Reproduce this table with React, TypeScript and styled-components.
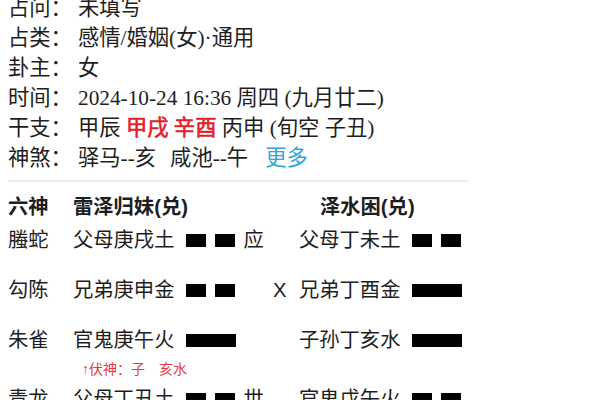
import React from "react";
import styled, { createGlobalStyle } from "styled-components";

const Global = createGlobalStyle`
  html, body { margin: 0; padding: 0; background: #fff; overflow: hidden; }
  body { color: #1e1e1e; }
`;

const Page = styled.div`
  width: 460px;
  padding-left: 8px;
  margin-top: -7px;
`;

const Info = styled.div`
  font-family: "Liberation Serif", "Noto Sans CJK SC", serif;
  font-size: 21.3px;
`;

const InfoRow = styled.div`
  display: flex;
  line-height: 30px;
  height: 30px;
  white-space: nowrap;
`;

const Label = styled.span`
  width: 70px;
  flex: none;
`;

const Red = styled.span`
  color: #e3202a;
  -webkit-text-stroke: 0.6px #e3202a;
`;

const Item = styled.span`
  margin-right: 14px;
`;

const More = styled.span`
  color: #2ea3dc;
  margin-left: 3px;
`;

const Divider = styled.div`
  height: 2px;
  background: #ececec;
  margin-top: 7px;
`;

const Table = styled.div`
  font-family: "Liberation Sans", "Noto Sans CJK SC", sans-serif;
  font-size: 20.3px;
  margin-top: 10px;
`;

const Head = styled.div`
  display: grid;
  grid-template-columns: 65px 247px auto;
  line-height: 30px;
  font-weight: 700;
  margin-bottom: 3px;
`;

const Group = styled.div`
  display: flex;
  flex-direction: column;
`;

const Row = styled.div`
  display: grid;
  grid-template-columns: 65px 200px 26px auto;
  line-height: 30px;
  height: 30px;
  align-items: center;
  white-space: nowrap;
`;

const Sub = styled.div`
  min-height: 20px;
  padding-left: 74px;
`;

const FuShen = styled.div`
  color: #e8393d;
  font-size: 14px;
  line-height: 29px;
`;

const Yao = styled.div`
  display: flex;
  align-items: center;
`;

const Lines = styled.div`
  display: flex;
  gap: 9px;
  margin-left: 12px;
`;

const Block = styled.div<{ $w: number }>`
  width: ${(p) => p.$w}px;
  height: 13px;
  background: #000;
`;

const Mark = styled.span`
  margin-left: 8px;
`;

const Move = styled.span`
  font-family: "Liberation Sans", sans-serif;
`;

type Line = "yin" | "yang";

const YaoLine = ({ t }: { t: Line }) => (
  <Lines>
    {t === "yang" ? (
      <Block $w={50} />
    ) : (
      <>
        <Block $w={20} />
        <Block $w={20} />
      </>
    )}
  </Lines>
);

const rows: {
  god: string;
  l: string;
  lt: Line;
  mark?: string;
  move?: string;
  r: string;
  rt: Line;
  fu?: string;
}[] = [
  { god: "螣蛇", l: "父母庚戌土", lt: "yin", mark: "应", r: "父母丁未土", rt: "yin" },
  { god: "勾陈", l: "兄弟庚申金", lt: "yin", move: "X", r: "兄弟丁酉金", rt: "yang" },
  { god: "朱雀", l: "官鬼庚午火", lt: "yang", r: "子孙丁亥水", rt: "yang", fu: "↑伏神：子　亥水" },
  { god: "青龙", l: "父母丁丑土", lt: "yin", mark: "世", r: "官鬼戊午火", rt: "yin" },
  { god: "玄武", l: "妻财丁卯木", lt: "yang", r: "父母戊辰土", rt: "yang" },
  { god: "白虎", l: "官鬼丁巳火", lt: "yang", r: "妻财戊寅木", rt: "yin" },
];

export default function App() {
  return (
    <>
      <Global />
      <Page>
        <Info>
          <InfoRow>
            <Label>占问：</Label>
            <span>未填写</span>
          </InfoRow>
          <InfoRow>
            <Label>占类：</Label>
            <span>感情/婚姻(女)·通用</span>
          </InfoRow>
          <InfoRow>
            <Label>卦主：</Label>
            <span>女</span>
          </InfoRow>
          <InfoRow>
            <Label>时间：</Label>
            <span>2024-10-24 16:36 周四 (九月廿二)</span>
          </InfoRow>
          <InfoRow>
            <Label>干支：</Label>
            <span>
              甲辰 <Red>甲戌 辛酉</Red> 丙申 (旬空 子丑)
            </span>
          </InfoRow>
          <InfoRow>
            <Label>神煞：</Label>
            <span>
              <Item>驿马--亥</Item>
              <Item>咸池--午</Item>
              <More>更多</More>
            </span>
          </InfoRow>
        </Info>
        <Divider />
        <Table>
          <Head>
            <span>六神</span>
            <span>雷泽归妹(兑)</span>
            <span>泽水困(兑)</span>
          </Head>
          {rows.map((r) => (
            <Group key={r.god}>
              <Row>
                <span>{r.god}</span>
                <Yao>
                  <span>{r.l}</span>
                  <YaoLine t={r.lt} />
                  {r.mark && <Mark>{r.mark}</Mark>}
                </Yao>
                <Move>{r.move ?? ""}</Move>
                <Yao>
                  <span>{r.r}</span>
                  <YaoLine t={r.rt} />
                </Yao>
              </Row>
              <Sub>{r.fu && <FuShen>{r.fu}</FuShen>}</Sub>
            </Group>
          ))}
        </Table>
      </Page>
    </>
  );
}
